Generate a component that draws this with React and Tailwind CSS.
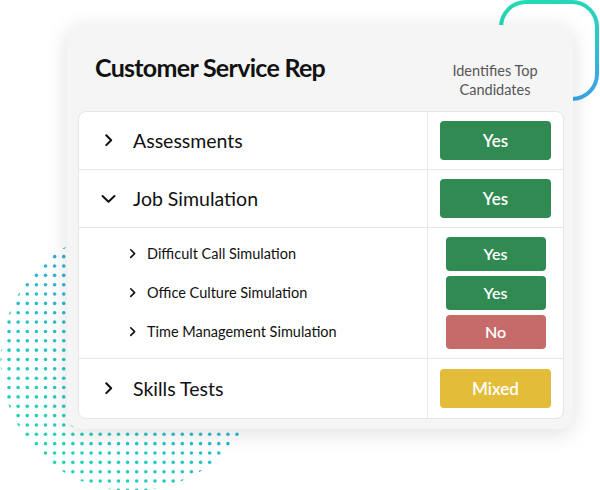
import React from 'react';

const rows = [
  { label: 'Assessments', open: false, value: 'Yes' },
  { label: 'Job Simulation', open: true, value: 'Yes' },
];

const subRows = [
  { label: 'Difficult Call Simulation', value: 'Yes' },
  { label: 'Office Culture Simulation', value: 'Yes' },
  { label: 'Time Management Simulation', value: 'No' },
];

const badgeColor = {
  Yes: 'bg-[#318a52]',
  No: 'bg-[#c76b6a]',
  Mixed: 'bg-[#e3bd39]',
};

const ChevronRight = ({ size = 9 }) => (
  <svg width={size} height={size * 1.6} viewBox="0 0 10 16" fill="none">
    <path d="M2.5 2.5 L8 8 L2.5 13.5" stroke="#111" strokeWidth="2.3" strokeLinecap="round" strokeLinejoin="round" />
  </svg>
);

const ChevronDown = () => (
  <svg width="15" height="10" viewBox="0 0 15 10" fill="none">
    <path d="M1.5 2 L7.5 7.8 L13.5 2" stroke="#111" strokeWidth="2" strokeLinecap="round" strokeLinejoin="round" />
  </svg>
);

// dotted half-tone circle behind the card
const Dots = () => {
  const dots = [];
  for (let r = 0; r < 29; r++) {
    for (let c = 0; c < 31; c++) {
      dots.push(<circle key={`${r}-${c}`} cx={c * 9.12 - 0.1} cy={r * 9.35 + 0.6} r="1.8" fill="url(#dotGrad)" />);
    }
  }
  return (
    <svg className="absolute left-0 top-[228px]" width="280" height="262" viewBox="0 0 280 262">
      <defs>
        <linearGradient id="dotGrad" gradientUnits="userSpaceOnUse" x1="30" y1="250" x2="190" y2="50">
          <stop offset="0" stopColor="#1edca8" />
          <stop offset="0.45" stopColor="#25c4c8" />
          <stop offset="1" stopColor="#3f98e6" />
        </linearGradient>
        <clipPath id="dotClip">
          <circle cx="131.5" cy="132" r="131" />
        </clipPath>
      </defs>
      <g clipPath="url(#dotClip)">{dots}</g>
    </svg>
  );
};

const Outline = () => (
  <svg className="absolute left-[497px] top-0" width="103" height="103" viewBox="0 0 103 103">
    <defs>
      <linearGradient id="lineGrad" x1="0" y1="0" x2="0.3" y2="1">
        <stop offset="0" stopColor="#22dcb0" />
        <stop offset="0.55" stopColor="#2ccbc6" />
        <stop offset="1" stopColor="#3aa8e2" />
      </linearGradient>
    </defs>
    <rect x="4" y="2" width="96" height="97" rx="25" stroke="url(#lineGrad)" strokeWidth="4" fill="none" />
  </svg>
);

const Badge = ({ value, small }) => (
  <div
    className={`${badgeColor[value]} ${small ? 'w-[100px] h-[34px] text-[16px]' : 'w-[111px] h-[39px] text-[17px]'} rounded-[4px] flex items-center justify-center text-white font-semibold`}
  >
    {value}
  </div>
);

export default function App() {
  return (
    <div className="relative w-[600px] h-[490px] overflow-hidden bg-white" style={{ fontFamily: 'Lato, "Open Sans", sans-serif' }}>
      <Dots />
      <Outline />

      <div className="relative ml-[67px] mt-[25px] w-[506px] h-[404px] rounded-[14px] bg-[#f5f5f5] shadow-[0_4px_22px_rgba(0,0,0,0.13)] pl-[11px] pr-[9px]">
        <div className="flex h-[86px]">
          <div className="flex-1 pl-[17px] pt-[30px]">
            <h1 className="text-[25px] font-bold text-[#111] tracking-[-0.7px] leading-none">Customer Service Rep</h1>
          </div>
          <div className="w-[138px] pt-[36px] text-center text-[14.5px] leading-[19px] text-[#555]">
            Identifies Top
            <br />
            Candidates
          </div>
        </div>

        <div className="bg-white rounded-[8px] border border-[#e6e6e6] overflow-hidden">
          {rows.map((row) => (
            <div key={row.label} className="flex h-[58px] border-b border-[#e6e6e6]">
              <div className="flex-1 flex items-center">
                <div className="w-[54px] flex justify-center pl-[4px]">
                  {row.open ? <ChevronDown /> : <ChevronRight />}
                </div>
                <span className="text-[19.5px] text-[#111]">{row.label}</span>
              </div>
              <div className="w-[136px] border-l border-[#e6e6e6] flex items-center justify-center">
                <Badge value={row.value} />
              </div>
            </div>
          ))}

          <div className="flex border-b border-[#e6e6e6]">
            <div className="flex-1 flex flex-col gap-[5px] pt-[9px] pb-[9px]">
              {subRows.map((s) => (
                <div key={s.label} className="h-[34px] flex items-center">
                  <div className="w-[68px] flex justify-end pr-[11px]">
                    <ChevronRight size={7} />
                  </div>
                  <span className="text-[14.5px] text-[#111]">{s.label}</span>
                </div>
              ))}
            </div>
            <div className="w-[136px] border-l border-[#e6e6e6] flex flex-col items-center gap-[5px] pt-[9px] pb-[9px]">
              {subRows.map((s) => (
                <Badge key={s.label} value={s.value} small />
              ))}
            </div>
          </div>

          <div className="flex h-[59px]">
            <div className="flex-1 flex items-center">
              <div className="w-[54px] flex justify-center pl-[4px]">
                <ChevronRight />
              </div>
              <span className="text-[19.5px] text-[#111]">Skills Tests</span>
            </div>
            <div className="w-[136px] border-l border-[#e6e6e6] flex items-center justify-center">
              <Badge value="Mixed" />
            </div>
          </div>
        </div>
      </div>
    </div>
  );
}
